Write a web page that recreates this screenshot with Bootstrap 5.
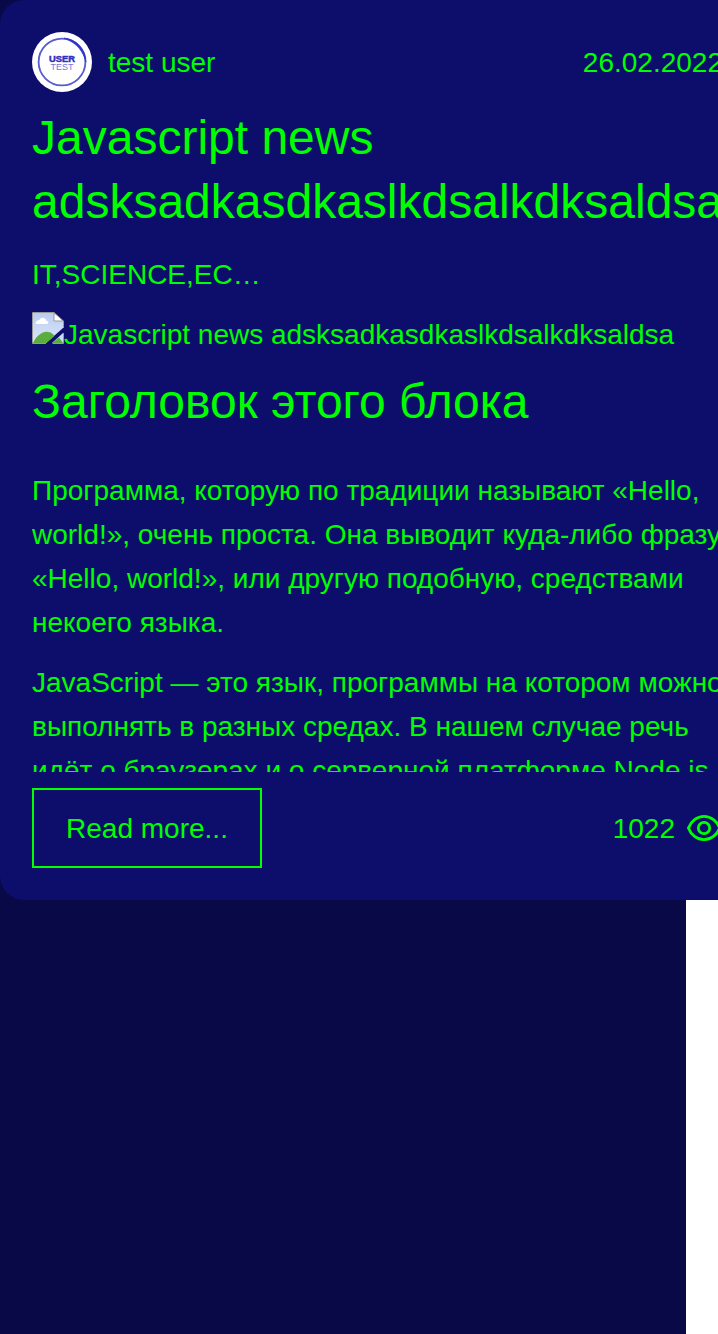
<!DOCTYPE html>
<html lang="ru">
<head>
<meta charset="utf-8">
<meta name="viewport" content="width=device-width, initial-scale=1">
<title>Javascript news</title>
<link href="https://cdn.jsdelivr.net/npm/bootstrap@5.3.0/dist/css/bootstrap.min.css" rel="stylesheet">
<style>
body { font: 28px/44px "Liberation Sans", Arial, sans-serif; color: #0f0; background: #fff; }
.page-bg { width: 686px; height: 1334px; background: #090947; }
.post { width: 754px; height: 900px; padding: 32px; border: 0; border-radius: 24px; background: #0d0d6b; color: #0f0; }
.avatar { width: 60px; height: 60px; margin-right: 16px; }
.post-title { font-size: 48px; line-height: 64px; font-weight: 400; margin: 14px 0 0; white-space: nowrap; }
.post-head { height: 60px; }
.post-head span, .views { padding-top: 2px; }
.post-date { margin-right: -1px; }
.tags { margin-top: 18px; line-height: 46px; }
.cover { height: 44px; margin-top: 14px; line-height: 46px; }
.post-text { height: 416px; white-space: nowrap; }
.post-text p { margin: 0 0 16px; }
.post-text .post-title { margin-bottom: 35px; }
.broken { width: 32px; height: 32px; }
.more { width: 230px; height: 80px; border: 2px solid #0f0; border-radius: 0; color: #0f0; font-size: 28px; line-height: 44px; padding: 17px 0 15px; }
.eye { width: 34px; height: 28px; margin: 0 1px 0 12px; }
</style>
</head>
<body class="overflow-hidden">
<main class="page-bg">
  <article class="card post">
    <header class="post-head d-flex align-items-center">
      <svg class="avatar" viewBox="0 0 60 60">
        <circle cx="30" cy="30" r="30" fill="#fff"/>
        <circle cx="30" cy="30" r="23.4" fill="none" stroke="#5a5ad2" stroke-width="1.8"/>
        <path d="M32 6A24 24 0 0 1 54 30C51 20 46 11.500 32 6Z" fill="#3232cf" stroke="#3232cf" stroke-width=".6"/>
        <text x="30" y="29.500" text-anchor="middle" font-family="Liberation Sans, sans-serif" font-weight="700" font-size="9.600" textLength="26" lengthAdjust="spacingAndGlyphs" fill="#3030c0" stroke="#3030c0" stroke-width=".5">USER</text>
        <text x="30" y="38.200" text-anchor="middle" font-family="Liberation Sans, sans-serif" font-size="9.800" textLength="23" lengthAdjust="spacingAndGlyphs" fill="#7777d8">TEST</text>
      </svg>
      <span>test user</span>
      <span class="post-date ms-auto">26.02.2022</span>
    </header>
    <h2 class="post-title">Javascript news<br>adsksadkasdkaslkdsalkdksaldsa</h2>
    <div class="tags">IT,SCIENCE,EC…</div>
    <div class="cover d-flex">
      <svg class="broken" viewBox="0 0 32 32">
        <defs><linearGradient id="sky" x2="0" y2="1"><stop stop-color="#b9cdf1"/><stop offset="1" stop-color="#dce6fb"/></linearGradient></defs>
        <path d="M1 1H22L31 9V16L14 31H1Z" fill="url(#sky)"/>
        <path d="M1 31C5 23 11 19 16 20C19 20 21 22 22.500 24L14.500 31H1Z" fill="#5bad3e"/>
        <path d="M31 21V31H20Z" fill="#c9daf7"/><path d="M27 25.500L31 31H20Z" fill="#5bad3e"/>
        <path d="M4 12C3 9 6 8 7.500 8C8 5 14 5 14 8.500C17 9 17 12 15 12Z" fill="#fff"/>
        <path d="M22 1V9H31Z" fill="#fff"/>
        <path d="M14 31.500H.5V.5H22L31.500 9V16M22 .5V9H31.500M31.500 21V31.500H20.500" fill="none" stroke="#999"/>
      </svg>
      <span class="text-nowrap">Javascript news adsksadkasdkaslkdsalkdksaldsa</span>
    </div>
    <section class="post-text overflow-hidden">
      <h2 class="post-title">Заголовок этого блока</h2>
      <p>Программа, которую по традиции называют «Hello,<br>world!», очень проста. Она выводит куда-либо фразу<br>«Hello, world!», или другую подобную, средствами<br>некоего языка.</p>
      <p>JavaScript — это язык, программы на котором можно<br>выполнять в разных средах. В нашем случае речь<br>идёт о браузерах и о серверной платформе Node.js.</p>
    </section>
    <footer class="d-flex align-items-center mt-auto">
      <button class="btn more">Read more...</button>
      <span class="views ms-auto">1022</span>
      <svg class="eye" viewBox="0 0 34 28" fill="none" stroke="#0f0" stroke-width="2.800">
        <path d="M1.400 14C4 7 10 2.300 17 2.300S30 7 32.600 14C30 21 24 25.700 17 25.700S4 21 1.400 14Z" stroke-linejoin="round"/>
        <circle cx="17" cy="14" r="5.700"/>
      </svg>
    </footer>
  </article>
</main>
<script src="https://cdn.jsdelivr.net/npm/bootstrap@5.3.0/dist/js/bootstrap.bundle.min.js"></script>
</body>
</html>
